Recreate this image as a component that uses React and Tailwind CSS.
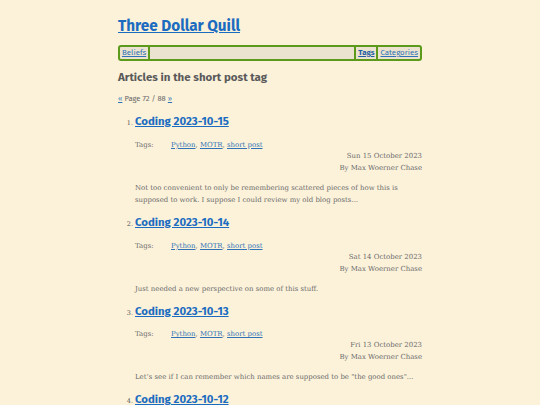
import React from 'react';

const posts = [
    {
        n: 1,
        title: 'Coding 2023-10-15',
        date: 'Sun 15 October 2023',
        a: 'Not too convenient to only be remembering scattered pieces of how this is',
        b: 'supposed to work. I suppose I could review my old blog posts...',
    },
    {
        n: 2,
        title: 'Coding 2023-10-14',
        date: 'Sat 14 October 2023',
        a: 'Just needed a new perspective on some of this stuff.',
    },
    {
        n: 3,
        title: 'Coding 2023-10-13',
        date: 'Fri 13 October 2023',
        a: 'Let\u2019s see if I can remember which names are supposed to be "the good ones"...',
    },
    {
        n: 4,
        title: 'Coding 2023-10-12',
        date: 'Thu 12 October 2023',
    },
];

const sans = "font-['Fira_Sans','Roboto','Liberation_Sans',sans-serif]";
const serif = "font-['DejaVu_Serif','Liberation_Serif',serif]";

const Post = ({ post }) => (
    <li className="mt-[9px] first:mt-0">
        <div className="flex items-baseline">
            <span className={`${serif} w-[17px] shrink-0 text-right pr-[2px] text-[6.5px] text-[#555]`}>{post.n}.</span>
            <a href="#" className={`${sans} text-[11.4px] leading-[14px] font-bold text-[#1b6cc0] underline`}>
                {post.title}
            </a>
        </div>
        <div className={`${serif} pl-[17px] text-[6.95px] text-[#6a6a6a]`}>
            <div className="mt-[11px] flex leading-[10px]">
                <span className="w-[36px] shrink-0">Tags:</span>
                <span>
                    <a href="#" className="text-[#2f72b6] underline">Python</a>,{' '}
                    <a href="#" className="text-[#2f72b6] underline">MOTR</a>,{' '}
                    <a href="#" className="text-[#2f72b6] underline">short post</a>
                </span>
            </div>
            <div className="text-right leading-[12px]">
                <div>{post.date}</div>
                <div>By Max Woerner Chase</div>
            </div>
            {post.a && (
                <p className="mt-[8px] leading-[12px] whitespace-nowrap">
                    {post.a}
                    {post.b && (<><br />{post.b}</>)}
                </p>
            )}
        </div>
    </li>
);

const App = () => {
    return (
        <div className="h-[405px] w-full bg-[#fcf2da] overflow-hidden">
            <div className="w-[304px] mx-auto pt-[16px]">
                {/* site title */}
                <h1 className={`${sans} text-[15.3px] leading-[20px] font-bold`}>
                    <a href="#" className="text-[#1b6cc0] underline">Three Dollar Quill</a>
                </h1>

                {/* nav bar */}
                <nav className={`${sans} mt-[9px] h-[16px] border-2 border-[#5c9a1c] rounded-[3px] bg-[#ebe3cf] flex items-center text-[7.9px] leading-[12px]`}>
                    <div className="flex-1 flex">
                        <a href="#" className="pl-[2px] pr-[2px] border-r-2 border-[#5c9a1c] text-[#2f72b6] underline">Beliefs</a>
                    </div>
                    <div className="flex">
                        <a href="#" className="px-[2px] border-l-2 border-[#5c9a1c] text-[#1d5ea3] font-bold underline">Tags</a>
                        <a href="#" className="pl-[2px] pr-[2px] border-l-2 border-[#5c9a1c] text-[#2f72b6] underline">Categories</a>
                    </div>
                </nav>

                <h2 className={`${sans} mt-[8px] text-[11.5px] leading-[16px] font-bold text-[#5a5a5a]`}>
                    Articles in the short post tag
                </h2>

                <div className={`${sans} mt-[9px] text-[7.6px] leading-[10px] text-[#666]`}>
                    <a href="#" className="text-[#2f72b6] underline">«</a> Page 72 / 88{' '}
                    <a href="#" className="text-[#2f72b6] underline">»</a>
                </div>

                <ol className="mt-[10px]">
                    {posts.map(p => (
                        <Post key={p.n} post={p} />
                    ))}
                </ol>
            </div>
        </div>
    );
};

export default App;
